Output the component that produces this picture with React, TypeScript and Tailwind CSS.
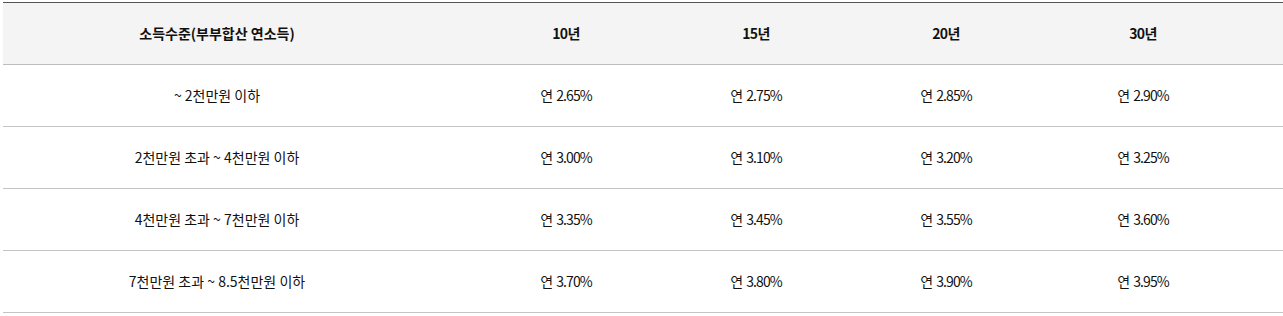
import React from 'react';

const years = ['10년', '15년', '20년', '30년'];

const rows = [
  { label: '~ 2천만원 이하', rates: ['2.65', '2.75', '2.85', '2.90'] },
  { label: '2천만원 초과 ~ 4천만원 이하', rates: ['3.00', '3.10', '3.20', '3.25'] },
  { label: '4천만원 초과 ~ 7천만원 이하', rates: ['3.35', '3.45', '3.55', '3.60'] },
  { label: '7천만원 초과 ~ 8.5천만원 이하', rates: ['3.70', '3.80', '3.90', '3.95'] },
];

const gridCols = 'grid grid-cols-[468px_190px_190px_190px_204px] items-center';

const App: React.FC = () => {
  return (
    <div
      className="w-[1283px] h-[316px] bg-white pt-[2px] pl-[3px] text-[14px] text-[#111]"
      style={{ fontFamily: '"Noto Sans CJK KR", "Noto Sans", sans-serif' }}
    >
      <div className="w-[1280px] border-t border-[#555]">
        {/* header */}
        <div className={`${gridCols} h-[62px] bg-[#f4f4f4] border-b border-[#bdbdbd] font-bold`}>
          <div className="pr-10 text-center">소득수준(부부합산 연소득)</div>
          {years.map((y) => (
            <div key={y} className="text-center tracking-[-0.6px]">{y}</div>
          ))}
        </div>

        {/* body */}
        {rows.map((row) => (
          <div key={row.label} className={`${gridCols} h-[62px] border-b border-[#c4c4c4]`}>
            <div className="pr-10 text-center">{row.label}</div>
            {row.rates.map((r) => (
              <div key={r} className="text-center">
                연 <span className="tracking-[-0.9px]">{r}%</span>
              </div>
            ))}
          </div>
        ))}
      </div>
    </div>
  );
};

export default App;
